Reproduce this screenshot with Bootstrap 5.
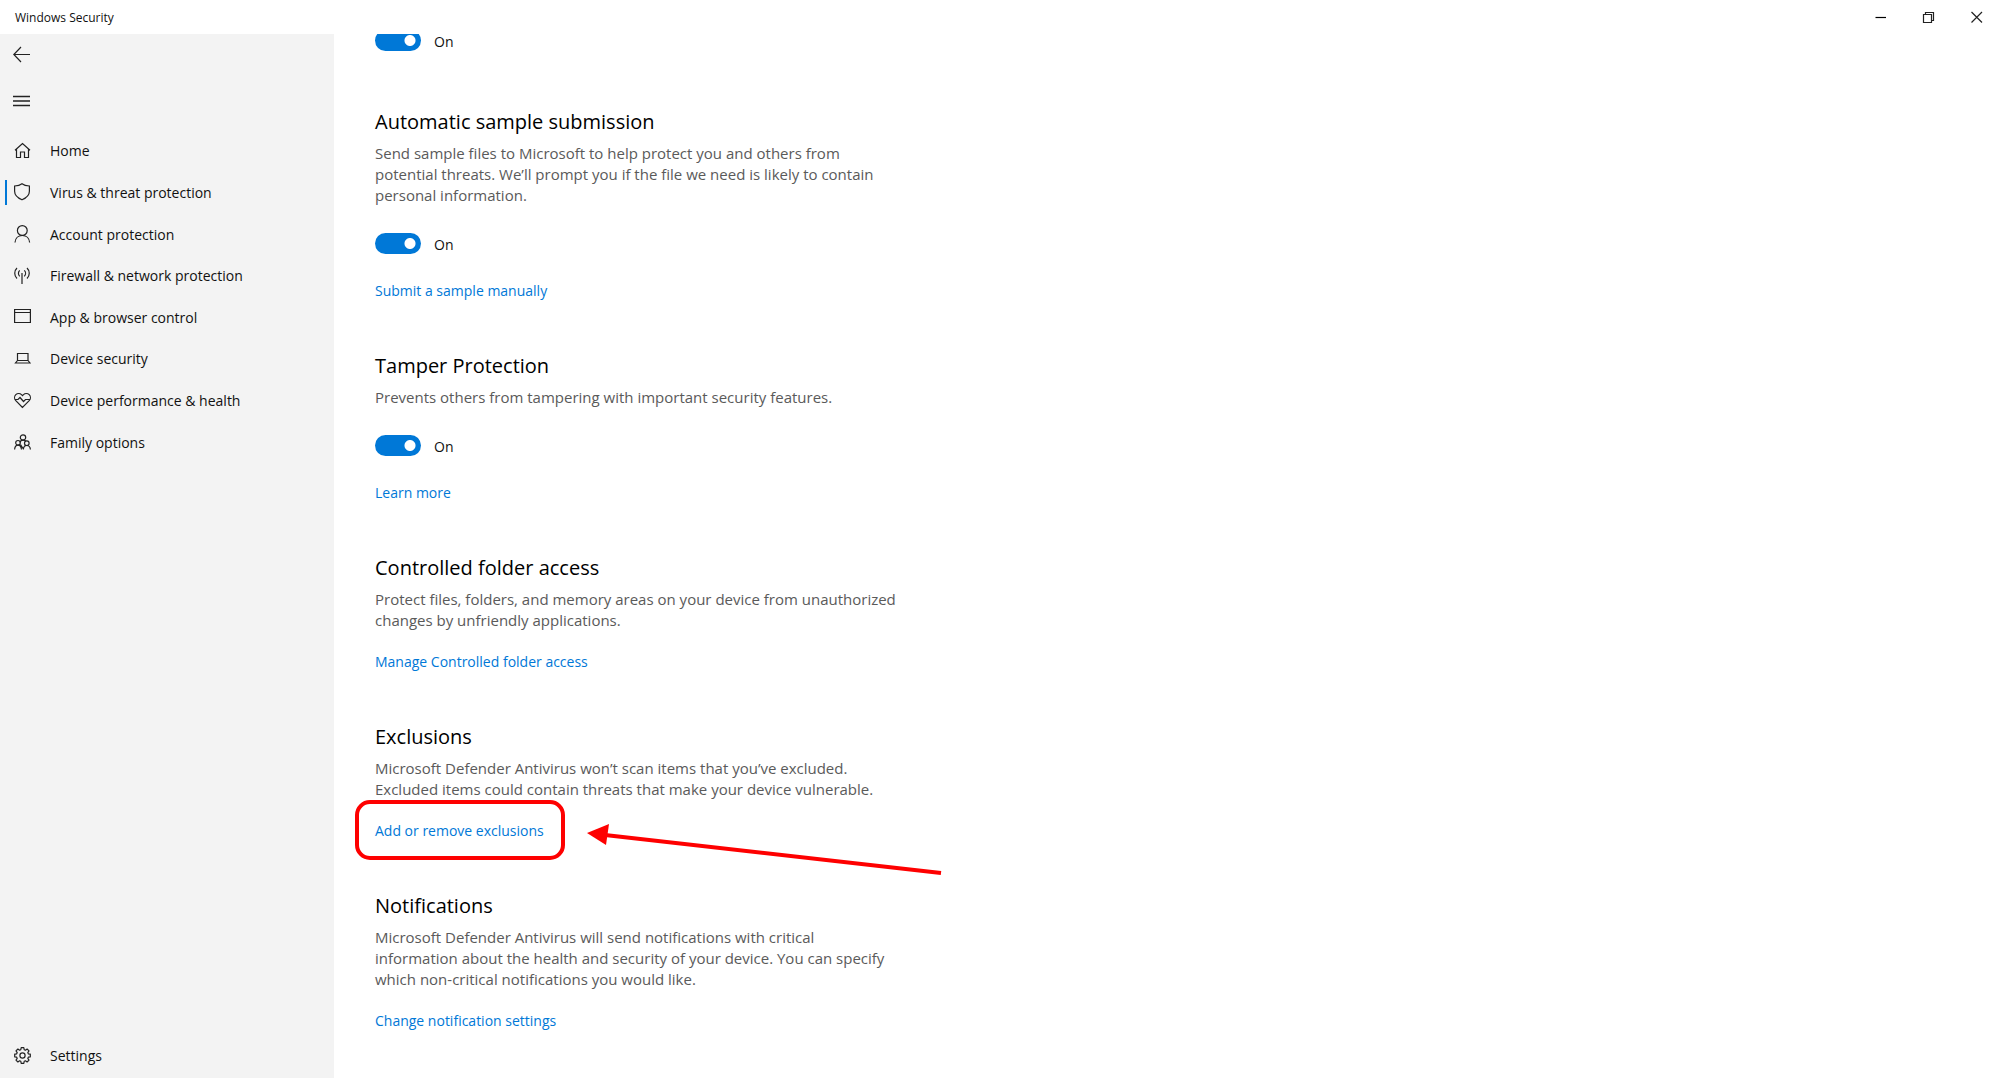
<!DOCTYPE html>
<html lang="en">
<head>
<meta charset="utf-8">
<meta name="viewport" content="width=device-width, initial-scale=1">
<title>Windows Security</title>
<link href="https://cdn.jsdelivr.net/npm/bootstrap@5.3.0/dist/css/bootstrap.min.css" rel="stylesheet">
<style>
  body { font-family: "Open Sans", "Noto Sans", sans-serif; font-size: 14px; line-height: 21px; color: #111; background: #fff; }
  svg { fill: none; stroke: #222; stroke-width: 1.2; display: block; flex: none; }
  .win-title { font-size: 12px; height: 34px; padding-left: 15px; }
  .win-btn { width: 48px; height: 34px; border: 0; background: none; padding: 0; }
  .win-btn:hover, .side-btn:hover, .side-link:hover { background: #e4e4e4; }
  .side-panel { width: 334px; background: #f3f3f3; padding-bottom: 2px; }
  .side-btn { width: 44px; height: 42px; border: 0; background: none; padding: 0 0 0 13px; }
  .side-menu { height: 50px; }
  .side-list { display: grid; grid-auto-rows: 1fr; height: 333px; }
  .side-link { min-height: 41px; padding-left: 14px; gap: 19px; color: #111; text-decoration: none; position: relative; }
  .side-link.active::before { content: ""; position: absolute; left: 5px; top: 8px; width: 2px; height: 25px; background: #0078d7; }
  .pane { padding-left: 41px; }
  .pane-scroll { margin-top: -4px; }
  .first-toggle { margin-bottom: 57px; }
  .setting { margin-bottom: 51px; max-width: 523px; }
  .setting h2 { font-size: 20px; line-height: 28px; font-weight: 400; margin-bottom: 7px; color: #000; }
  .setting p { font-size: 15px; color: #5a5a5a; margin-bottom: 20px; }
  .setting a { color: #0078d7; text-decoration: none; }
  .setting a:hover { text-decoration: underline; }
  .toggle-row { gap: 13px; min-height: 21px; padding: 0; }
  .toggle-row label { line-height: 14px; margin-top: 2px; }
  .setting .toggle-row { margin: 27px 0 26px; }
  .form-switch .toggle-row-input.form-check-input { width: 46px; height: 21px; margin: 0; float: none; border: 0; border-radius: 11px; background-color: #0078d7;
    background-image: radial-gradient(circle at 35px 50%, #fff 5px, transparent 6px); background-position: 0 0; background-size: 100% 100%; }
  .form-switch .toggle-row-input.form-check-input:not(:checked) { background-color: #777; background-image: radial-gradient(circle at 11px 50%, #fff 5px, transparent 6px); }
  .marked { position: relative; }
  .mark-frame { position: absolute; left: -20px; top: -20px; width: 210px; height: 60px; border: 4px solid #fe0000; border-radius: 15px; pointer-events: none; }
  .mark-arrow { position: absolute; left: 212px; top: 0; pointer-events: none; }
</style>
<script src="https://cdn.jsdelivr.net/npm/bootstrap@5.3.0/dist/js/bootstrap.bundle.min.js"></script>
</head>
<body class="d-flex flex-column vh-100 overflow-hidden">
<header class="win-title d-flex align-items-center flex-shrink-0">
  <span class="me-auto">Windows Security</span>
  <button class="win-btn" type="button" aria-label="Minimize"><svg width="48" height="34"><path d="M19.500 17.500h10.500" stroke="#000"/></svg></button>
  <button class="win-btn" type="button" aria-label="Restore"><svg width="48" height="34" stroke="#000"><path d="M19.500 14.500h8v8h-8zM21.500 14.500v-2h8v8h-2"/></svg></button>
  <button class="win-btn" type="button" aria-label="Close"><svg width="48" height="34"><path d="M19.500 12l10.500 10.500M30 12L19.500 22.500"/></svg></button>
</header>
<div class="d-flex flex-fill overflow-hidden">
  <aside class="side-panel d-flex flex-column flex-shrink-0">
    <button class="side-btn" type="button" aria-label="Back"><svg width="18" height="18" viewBox="0 0 18 18"><path d="M17 8.500H1M8 1L.800 8.500 8 16"/></svg></button>
    <button class="side-btn side-menu" type="button" aria-label="Menu"><svg width="18" height="18" viewBox="0 0 18 18"><path d="M0 4.500h17M0 9h17M0 13.500h17" stroke-width="1.300"/></svg></button>
    <nav class="d-flex flex-column flex-fill mt-1">
      <div class="side-list">
        <a class="side-link d-flex align-items-center" href="#"><svg width="17" height="18" viewBox="0 0 17 18"><path d="M1 8.300L8.500 1.500 16 8.300M2.500 7.200v8.300h4V10h4v5.500h4V7.200"/></svg>Home</a>
        <a class="side-link active d-flex align-items-center" href="#" aria-current="page"><svg width="17" height="18" viewBox="0 0 17 18"><path d="M8 .800C5.800 2.500 3.300 2.900.600 3v5.200C.600 12 3.500 14.800 8 16.800c4.500-2 7.400-4.800 7.400-8.600V3C12.700 2.900 10.200 2.500 8 .800z"/></svg>Virus &amp; threat protection</a>
        <a class="side-link d-flex align-items-center" href="#"><svg width="17" height="18" viewBox="0 0 17 18"><circle cx="8.300" cy="5.500" r="4.900"/><path d="M1 17.500c.300-4 3.200-7 7.300-7s7 3 7.300 7"/></svg>Account protection</a>
        <a class="side-link d-flex align-items-center" href="#"><svg width="17" height="18" viewBox="0 0 17 18"><path d="M8 6v11M3 1C0 3.800 0 8.700 3 11.500M13 1c3 2.800 3 7.700 0 10.500M5.700 3.300c-1.700 1.700-1.700 4.300 0 6M10.300 3.300c1.700 1.700 1.700 4.300 0 6"/></svg>Firewall &amp; network protection</a>
        <a class="side-link d-flex align-items-center" href="#"><svg width="17" height="18" viewBox="0 0 17 18"><path d="M.600 1.500h15.800v13H.600zM.600 4.500h15.800"/></svg>App &amp; browser control</a>
        <a class="side-link d-flex align-items-center" href="#"><svg width="17" height="18" viewBox="0 0 17 18"><path d="M3.500 3.500h10.500v7H3.500zM3.500 10.500l-2 2.500h14.500l-2-2.500"/></svg>Device security</a>
        <a class="side-link d-flex align-items-center" href="#"><svg width="17" height="18" viewBox="0 0 17 18"><path d="M8.500 15.500L1.800 8.700C.200 7 .200 4.300 1.800 2.700s4.200-1.600 5.700 0l1 1 1-1c1.500-1.600 4.100-1.600 5.700 0s1.600 4.300 0 6zM1 7.500h3L6 5.500l3.500 4 2-2h4.500"/></svg>Device performance &amp; health</a>
        <a class="side-link d-flex align-items-center" href="#"><svg width="17" height="18" viewBox="0 0 17 18"><circle cx="9" cy="4.500" r="2.700"/><circle cx="4" cy="9.800" r="2.300"/><circle cx="12.800" cy="10.200" r="2.300"/><path d="M6 9.500C6.300 8 7.500 7.200 9 7.200s2.500.600 3 1M.600 16.500c.200-2.800 1.500-4.400 3.400-4.400s3.200 1.600 3.500 4.400M9.300 16.500c.300-2.600 1.500-4 3.500-4s3.400 1.500 3.600 4M6.500 11.500L9 15.500l2-3"/></svg>Family options</a>
      </div>
      <a class="side-link d-flex align-items-center mt-auto" href="#"><svg width="17" height="18" viewBox="0 0 17 18"><circle cx="8.500" cy="8.500" r="2.600"/><path stroke-linejoin="round" d="M7.200.700h2.600l.400 2 1.200.500L13.100 2l1.900 1.900-1.200 1.700.500 1.200 2 .400v2.600l-2 .400-.500 1.200L15 13.100 13.100 15l-1.700-1.200-1.200.500-.400 2H7.200l-.400-2-1.200-.500L3.900 15 2 13.100l1.200-1.700-.500-1.200-2-.400V7.200l2-.400.500-1.200L2 3.900 3.900 2l1.700 1.200 1.200-.500z"/></svg>Settings</a>
    </nav>
  </aside>
  <main class="pane flex-fill overflow-hidden">
    <div class="pane-scroll">
      <div class="form-check form-switch toggle-row first-toggle d-flex align-items-center">
        <input class="form-check-input toggle-row-input" type="checkbox" role="switch" id="cloud" checked>
        <label for="cloud">On</label>
      </div>
      <section class="setting">
        <h2>Automatic sample submission</h2>
        <p>Send sample files to Microsoft to help protect you and others from potential threats. We’ll prompt you if the file we need is likely to contain personal information.</p>
        <div class="form-check form-switch toggle-row d-flex align-items-center">
          <input class="form-check-input toggle-row-input" type="checkbox" role="switch" id="sample" checked>
          <label for="sample">On</label>
        </div>
        <a href="#">Submit a sample manually</a>
      </section>
      <section class="setting">
        <h2>Tamper Protection</h2>
        <p>Prevents others from tampering with important security features.</p>
        <div class="form-check form-switch toggle-row d-flex align-items-center">
          <input class="form-check-input toggle-row-input" type="checkbox" role="switch" id="tamper" checked>
          <label for="tamper">On</label>
        </div>
        <a href="#">Learn more</a>
      </section>
      <section class="setting">
        <h2>Controlled folder access</h2>
        <p>Protect files, folders, and memory areas on your device from unauthorized changes by unfriendly applications.</p>
        <a href="#">Manage Controlled folder access</a>
      </section>
      <section class="setting">
        <h2>Exclusions</h2>
        <p>Microsoft Defender Antivirus won’t scan items that you’ve excluded. Excluded items could contain threats that make your device vulnerable.</p>
        <div class="marked">
          <a href="#">Add or remove exclusions</a>
          <span class="mark-frame"></span>
          <svg class="mark-arrow" width="356" height="58" viewBox="0 0 356 58"><path d="M18 15L354 53" stroke="#fe0000" stroke-width="4"/><path d="M0 13L22 4 19 25z" fill="#fe0000" stroke="none"/></svg>
        </div>
      </section>
      <section class="setting">
        <h2>Notifications</h2>
        <p>Microsoft Defender Antivirus will send notifications with critical information about the health and security of your device. You can specify which non-critical notifications you would like.</p>
        <a href="#">Change notification settings</a>
      </section>
    </div>
  </main>
</div>
</body>
</html>
